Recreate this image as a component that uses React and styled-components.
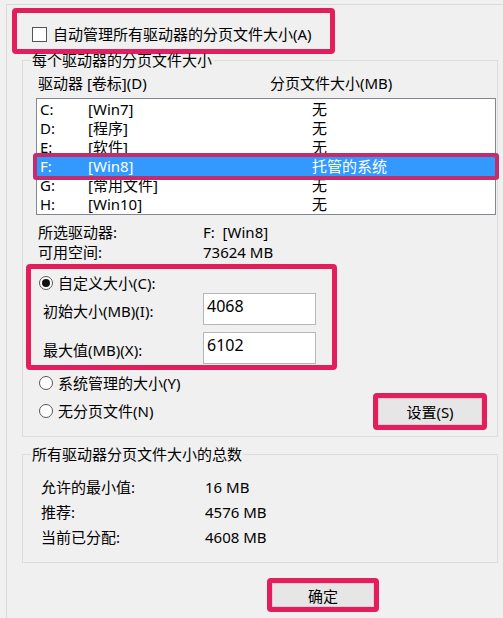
import React from 'react';
import styled, { createGlobalStyle, css } from 'styled-components';

const PINK = '#e31e5c';
const ROW_PINK = '#c42d6b';

const GlobalStyle = createGlobalStyle`
  html, body {
    margin: 0;
    padding: 0;
    background: #f0f0f0;
  }
  body {
    font-family: "Noto Sans", "Noto Sans CJK SC", sans-serif;
    font-size: 15px;
    color: #000;
  }
  * { box-sizing: border-box; }
`;

const Page = styled.div`
  padding: 4px 0 0 6px;
  min-height: 100vh;
`;

const Frame = styled.div`
  border-top: 1px solid #d9d9d9;
  border-left: 1px solid #d9d9d9;
  min-height: calc(100vh - 4px);
  display: flex;
  flex-direction: column;
  align-items: flex-start;
`;

const Highlight = styled.div`
  border: 5px solid ${PINK};
  border-radius: 4px;
`;

const CheckHighlight = styled(Highlight)`
  margin: 3px 0 0 5px;
  width: 323px;
  height: 46px;
  display: flex;
  align-items: center;
  gap: 6px;
  padding: 6px 0 0 15px;
  line-height: 20px;
`;

const CheckBox = styled.span`
  width: 15px;
  height: 15px;
  border: 1px solid #555;
  background: #fff;
  flex: none;
`;

const GroupBox = styled.fieldset`
  margin: ${(p) => p.$mt}px 0 0 15px;
  width: 476px;
  min-width: 0;
  border: 1px solid #dcdcdc;
  padding: 0 0 ${(p) => p.$pb}px 9px;
  display: flex;
  flex-direction: column;
`;

const Legend = styled.legend`
  padding: 0 1px;
  margin-left: -1px;
  line-height: 20px;
`;

const HeaderRow = styled.div`
  display: grid;
  grid-template-columns: 232px auto;
  margin: 3px 0 0 6px;
  line-height: 20px;
`;

const ListBox = styled.div`
  margin: 5px 0 0 4px;
  width: 460px;
  height: 117px;
  border: 1px solid #828790;
  background: #fff;
  padding-top: 1px;
`;

const DriveRow = styled.div`
  display: grid;
  grid-template-columns: 48px 224px 1fr;
  height: 19px;
  line-height: 19px;
  padding-left: 3px;
  position: relative;
  ${(p) =>
    p.$selected &&
    css`
      background: #3399ff;
      color: #fff;
      box-shadow: 0 0 0 4px ${ROW_PINK};
      border-radius: 1px;
      z-index: 1;
    `}
`;

const InfoGrid = styled.div`
  display: grid;
  grid-template-columns: 165px auto;
  grid-auto-rows: 20px;
  line-height: 20px;
  margin: 7px 0 0 6px;
`;

const CustomHighlight = styled(Highlight)`
  margin: 2px 0 0 -6px;
  width: 311px;
  height: 106px;
  padding-top: 4px;
  display: flex;
  flex-direction: column;
`;

const RadioRow = styled.div`
  display: flex;
  align-items: center;
  gap: 5px;
  height: 20px;
  line-height: 20px;
  margin-left: ${(p) => p.$ml}px;
`;

const Radio = styled.span`
  width: 14px;
  height: 14px;
  border-radius: 50%;
  border: 1px solid #555;
  background: #fff;
  flex: none;
  display: flex;
  align-items: center;
  justify-content: center;
  &::after {
    content: '';
    width: 8px;
    height: 8px;
    border-radius: 50%;
    background: ${(p) => (p.$checked ? '#111' : 'transparent')};
  }
`;

const FieldRow = styled.div`
  display: flex;
  align-items: center;
  padding-left: 12px;
  margin-top: ${(p) => p.$mt}px;
  line-height: 20px;
`;

const FieldLabel = styled.span`
  width: 160px;
  padding-top: 3px;
`;

const NumberInput = styled.input`
  width: 113px;
  height: 32px;
  border: 1px solid #b7b7b7;
  background: #fff;
  padding: 0 3px 7px;
  font: inherit;
  font-size: 16px;
  color: #000;
  outline: none;
`;

const BottomRow = styled.div`
  display: flex;
  justify-content: space-between;
  align-items: flex-start;
`;

const RadioColumn = styled.div`
  display: flex;
  flex-direction: column;
  gap: 8px;
  padding-top: 3px;
`;

const PinkButton = styled.button`
  border: 5px solid ${PINK};
  border-radius: 4px;
  background: #e6e6e6;
  box-shadow: inset 0 0 0 1px #f2c6d4;
  font: inherit;
  color: #000;
  padding: 0;
  cursor: default;
`;

const SetButton = styled(PinkButton)`
  width: 114px;
  height: 37px;
  margin: 23px 10px 0 0;
`;

const TotalsGrid = styled.div`
  display: grid;
  grid-template-columns: 164px auto;
  grid-auto-rows: 25px;
  line-height: 25px;
  margin: 11px 0 0 9px;
`;

const OkButton = styled(PinkButton)`
  width: 112px;
  height: 34px;
  margin: 15px 0 0 260px;
`;

const drives = [
  ['C:', '[Win7]', '无'],
  ['D:', '[程序]', '无'],
  ['E:', '[软件]', '无'],
  ['F:', '[Win8]', '托管的系统'],
  ['G:', '[常用文件]', '无'],
  ['H:', '[Win10]', '无'],
];

export default function App() {
  return (
    <>
      <GlobalStyle />
      <Page>
        <Frame>
          <CheckHighlight>
            <CheckBox />
            <span>自动管理所有驱动器的分页文件大小(A)</span>
          </CheckHighlight>

          <GroupBox $mt={-4} $pb={6}>
            <Legend>每个驱动器的分页文件大小</Legend>
            <HeaderRow>
              <span>驱动器 [卷标](D)</span>
              <span>分页文件大小(MB)</span>
            </HeaderRow>
            <ListBox>
              {drives.map(([d, label, size]) => (
                <DriveRow key={d} $selected={d === 'F:'}>
                  <span>{d}</span>
                  <span>{label}</span>
                  <span>{size}</span>
                </DriveRow>
              ))}
            </ListBox>
            <InfoGrid>
              <span>所选驱动器:</span>
              <span>F:&nbsp;&nbsp;[Win8]</span>
              <span>可用空间:</span>
              <span>73624 MB</span>
            </InfoGrid>
            <CustomHighlight>
              <RadioRow $ml={8}>
                <Radio $checked />
                <span>自定义大小(C):</span>
              </RadioRow>
              <FieldRow $mt={0}>
                <FieldLabel>初始大小(MB)(I):</FieldLabel>
                <NumberInput readOnly defaultValue="4068" />
              </FieldRow>
              <FieldRow $mt={7}>
                <FieldLabel>最大值(MB)(X):</FieldLabel>
                <NumberInput readOnly defaultValue="6102" />
              </FieldRow>
            </CustomHighlight>
            <BottomRow>
              <RadioColumn>
                <RadioRow $ml={7}>
                  <Radio />
                  <span>系统管理的大小(Y)</span>
                </RadioRow>
                <RadioRow $ml={7}>
                  <Radio />
                  <span>无分页文件(N)</span>
                </RadioRow>
              </RadioColumn>
              <SetButton>设置(S)</SetButton>
            </BottomRow>
          </GroupBox>

          <GroupBox $mt={7} $pb={12}>
            <Legend>所有驱动器分页文件大小的总数</Legend>
            <TotalsGrid>
              <span>允许的最小值:</span>
              <span>16 MB</span>
              <span>推荐:</span>
              <span>4576 MB</span>
              <span>当前已分配:</span>
              <span>4608 MB</span>
            </TotalsGrid>
          </GroupBox>

          <OkButton>确定</OkButton>
        </Frame>
      </Page>
    </>
  );
}
